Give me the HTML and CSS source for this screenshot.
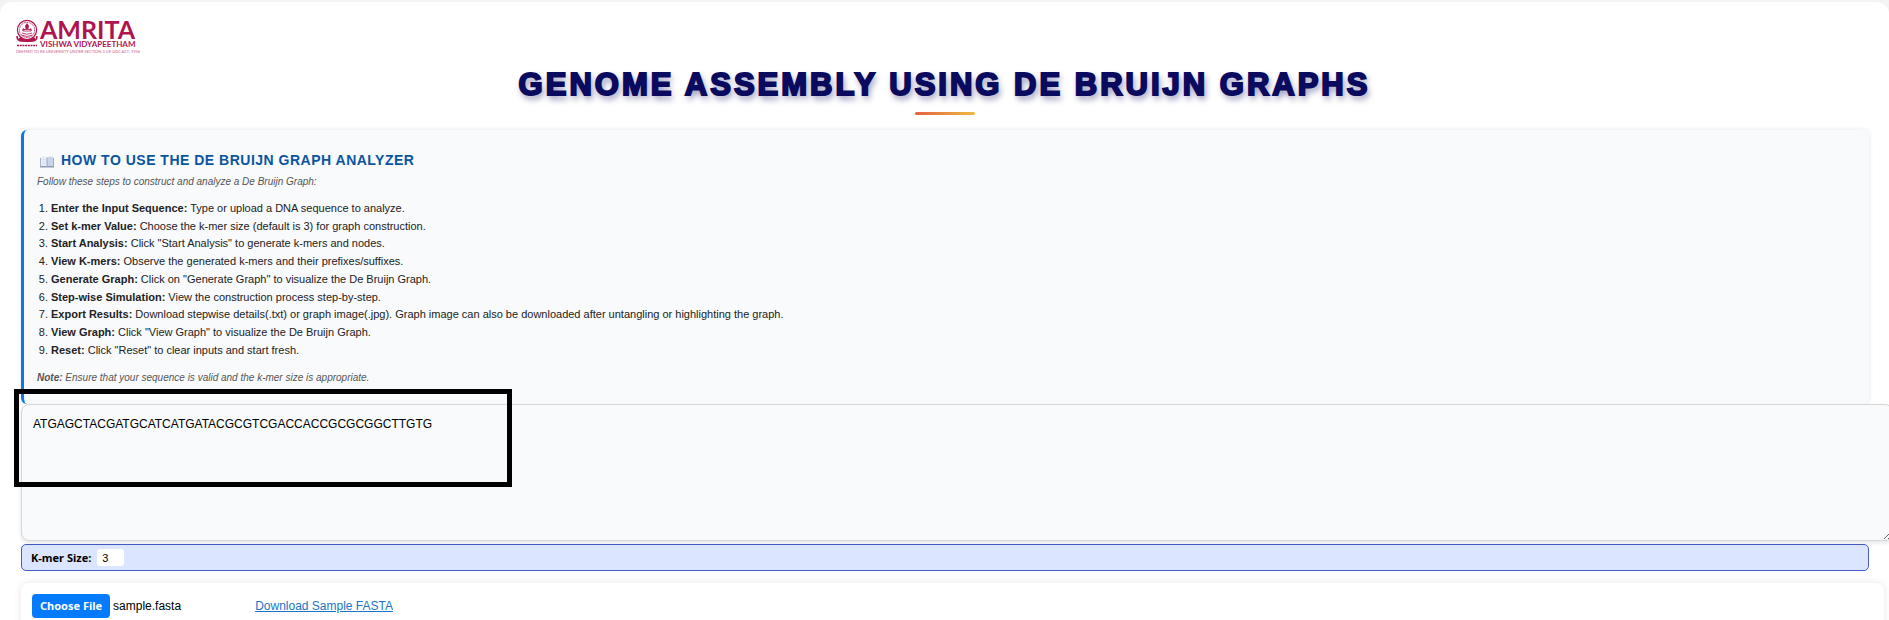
FILE: index.html
```html
<!DOCTYPE html>
<html lang="en">
<head>
<meta charset="utf-8">
<meta name="viewport" content="width=device-width, initial-scale=1">
<title>Genome Assembly Using De Bruijn Graphs</title>
<link rel="stylesheet" href="styles.css">
</head>
<body>
<main class="page">
  <header class="header">
    <div class="logo">
      <div class="logo-top">
        <svg class="logo-seal" viewBox="0 0 22 28" aria-hidden="true">
          <g fill="none" stroke="#b0144f">
            <circle cx="11" cy="11" r="9.6" stroke-width="1.2"/>
            <circle cx="11" cy="11" r="7.6" stroke-width="1" stroke-dasharray="1 .7"/>
            <path d="M6 14q5 2.500 10 0M5.500 16q5.500 3 11 0M7 12h8M8 10.500h6" stroke-width=".8"/>
            <path d="M1 17q0 5 5 5h10q5 0 5-5" stroke-width="1.600"/>
            <path d="M1 26.500h20" stroke-width="1.500" stroke-dasharray="2 .7"/>
          </g>
          <path d="M11 4l2 3-.7 3h-2.600L9 7zM7 9l2 2-3 1zM15 9l-2 2 3 1zM4 18q7 5 14 0l2 3q-9 4-18 0z" fill="#b0144f"/>
        </svg>
        <div class="logo-words">
          <span class="logo-name">AMRITA</span>
          <span class="logo-sub">VISHWA VIDYAPEETHAM</span>
        </div>
      </div>
      <span class="logo-tag">DEEMED TO BE UNIVERSITY UNDER SECTION 3 OF UGC ACT, 1956</span>
    </div>
    <h1 class="title">Genome Assembly Using De Bruijn Graphs</h1>
    <div class="title-rule"></div>
  </header>

  <div class="content">
    <section class="guide">
      <h2 class="guide-title">
        <svg class="book" viewBox="0 0 14 12" aria-hidden="true">
          <path d="M0 2h14v9.500H0z" fill="#8e9bb8"/>
          <path d="M.7 1q3.500-1 6.300.5v9q-3-1.200-6.300-.3z" fill="#e8edf8"/>
          <path d="M13.300 1Q9.800 0 7 1.500v9q3-1.200 6.300-.3z" fill="#cbd5ec"/>
          <path d="M2 3.500h3.500M2 5.500h3.500M2 7.500h3.500M8.500 3.500H12M8.500 5.500H12M8.500 7.500H12" stroke="#c9d1e4" stroke-width=".5"/>
          <path d="M7 1.500v9.500" stroke="#8290b0" stroke-width=".7"/>
        </svg>
        How to Use the De Bruijn Graph Analyzer
      </h2>
      <p class="hint">Follow these steps to construct and analyze a De Bruijn Graph:</p>
      <ol class="steps">
        <li><strong>Enter the Input Sequence:</strong> Type or upload a DNA sequence to analyze.</li>
        <li><strong>Set k-mer Value:</strong> Choose the k-mer size (default is 3) for graph construction.</li>
        <li><strong>Start Analysis:</strong> Click "Start Analysis" to generate k-mers and nodes.</li>
        <li><strong>View K-mers:</strong> Observe the generated k-mers and their prefixes/suffixes.</li>
        <li><strong>Generate Graph:</strong> Click on "Generate Graph" to visualize the De Bruijn Graph.</li>
        <li><strong>Step-wise Simulation:</strong> View the construction process step-by-step.</li>
        <li><strong>Export Results:</strong> Download stepwise details(.txt) or graph image(.jpg). Graph image can also be downloaded after untangling or highlighting the graph.</li>
        <li><strong>View Graph:</strong> Click "View Graph" to visualize the De Bruijn Graph.</li>
        <li><strong>Reset:</strong> Click "Reset" to clear inputs and start fresh.</li>
      </ol>
      <p class="hint"><strong>Note:</strong> Ensure that your sequence is valid and the k-mer size is appropriate.</p>
    </section>

    <div class="sequence">
      <textarea class="sequence-input" aria-label="Input sequence" spellcheck="false">ATGAGCTACGATGCATCATGATACGCGTCGACCACCGCGCGGCTTGTG</textarea>
      <div class="highlight"></div>
    </div>

    <div class="kmer">
      <label class="kmer-label" for="kmer">K-mer Size:</label>
      <input class="kmer-input" id="kmer" type="text" inputmode="numeric" value="3">
    </div>
  </div>

  <section class="upload">
    <div class="picker">
      <button class="choose" type="button">Choose File</button>
      <span>sample.fasta</span>
    </div>
    <a class="sample" href="#">Download Sample FASTA</a>
  </section>
</main>
</body>
</html>
```

FILE: styles.css
```css
* {
  box-sizing: border-box;
}

body {
  margin: 0;
  padding-top: 2px;
  background: #f3f3f3;
  font-family: "Liberation Sans", Arial, sans-serif;
  font-size: 12px;
  color: #000;
  overflow: hidden;
}

.page {
  min-height: 100vh;
  padding: 17px 5px 20px 16px;
  background: #fff;
  border-radius: 12px;
}

.header {
  display: flex;
  flex-direction: column;
  padding-right: 11px;
}

.logo {
  display: flex;
  flex-direction: column;
  align-self: flex-start;
  color: #b0144f;
  font-family: Lato, sans-serif;
  white-space: nowrap;
}

.logo-top {
  display: flex;
  gap: 2px;
}

.logo-seal {
  width: 22px;
  height: 28px;
}

.logo-words {
  display: flex;
  flex-direction: column;
}

.logo-name {
  font-size: 25px;
  font-weight: 700;
  line-height: 21px;
}

.logo-sub {
  font-size: 8px;
  font-weight: 700;
  line-height: 9px;
}

.logo-tag {
  font-size: 4px;
  line-height: 6px;
  opacity: 0.7;
}

.title {
  margin: 7px 0 0;
  color: #0a0a5e;
  font-size: 31px;
  font-weight: 900;
  line-height: 46px;
  letter-spacing: 3px;
  text-align: center;
  text-transform: uppercase;
  text-shadow: 2px 4px 6px rgba(10, 10, 94, 0.5);
  -webkit-text-stroke: 2px #0a0a5e;
}

.title-rule {
  width: 60px;
  height: 3px;
  margin: 4px auto 15px;
  border-radius: 2px;
  background: linear-gradient(90deg, #e4633f, #efb842);
}

.content {
  padding: 0 15px 0 5px;
}

.guide {
  padding: 19px 12px 18px 13px;
  background: #f8fafc;
  border-left: 3px solid #0b78e6;
  border-radius: 6px;
  box-shadow: 0 0 5px rgba(0, 0, 0, 0.1);
}

.guide-title {
  display: flex;
  align-items: center;
  gap: 7px;
  margin: 0;
  padding-left: 3px;
  color: #0b559f;
  font-size: 14px;
  line-height: 22px;
  letter-spacing: 0.5px;
  text-transform: uppercase;
}

.book {
  width: 14px;
  height: 12px;
  margin-top: 3px;
}

.hint {
  margin: 3px 0 0;
  color: #555;
  font-size: 10px;
  font-style: italic;
  line-height: 16px;
}

.steps {
  margin: 10px 0 11px;
  padding-left: 14px;
  color: #222;
  font-size: 11px;
  line-height: 1.61;
}

.sequence {
  position: relative;
}

.sequence-input {
  display: block;
  box-sizing: content-box;
  width: 100%;
  height: 113px;
  margin: 0;
  padding: 11px;
  background: #f8fafc;
  border: 1px solid #d4d6d8;
  border-radius: 8px;
  box-shadow: 0 2px 4px rgba(0, 0, 0, 0.1);
  font: 12px/16px "Liberation Sans", Arial, sans-serif;
  color: #000;
}

.highlight {
  position: absolute;
  top: -15px;
  left: -7px;
  width: 498px;
  height: 98px;
  border: 5px solid #000;
  pointer-events: none;
}

.kmer {
  display: flex;
  align-items: center;
  gap: 6px;
  margin-top: 3px;
  padding: 4px 9px;
  background: #dbe5ff;
  border: 1px solid #465cc4;
  border-radius: 5px;
}

.kmer-label {
  font: 700 11px/16px "Noto Sans", sans-serif;
}

.kmer-input {
  width: 27px;
  height: 17px;
  padding: 0 5px;
  border: 0;
  border-radius: 3px;
  background: #fff;
  font: 11px/16px "Liberation Sans", Arial, sans-serif;
}

.upload {
  display: flex;
  align-items: center;
  gap: 74px;
  margin: 12px 0 0 5px;
  padding: 11px;
  border-radius: 8px;
  box-shadow: 0 0 8px rgba(0, 0, 0, 0.1);
}

.picker {
  display: flex;
  align-items: center;
  gap: 3px;
}

.choose {
  height: 24px;
  padding: 0 8px;
  border: 0;
  border-radius: 4px;
  background: #047bfe;
  color: #fff;
  font: 700 11px/16px "Noto Sans", sans-serif;
}

.sample {
  color: #1a75c4;
}
```
